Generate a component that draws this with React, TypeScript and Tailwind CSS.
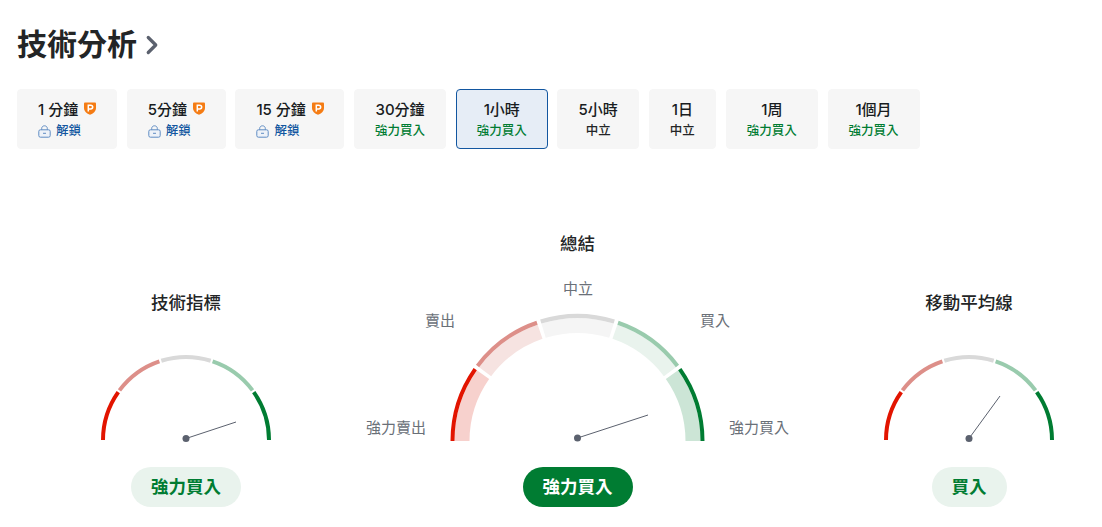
import React from 'react';
import { ChevronRight } from 'lucide-react';

const tabs = [
  { label: '1 分鐘', locked: true, width: 'w-[100px]' },
  { label: '5分鐘', locked: true, width: 'w-[99px]' },
  { label: '15 分鐘', locked: true, width: 'w-[109px]' },
  { label: '30分鐘', signal: '強力買入', width: 'w-[92px]' },
  { label: '1小時', signal: '強力買入', active: true, width: 'w-[92px]' },
  { label: '5小時', signal: '中立', width: 'w-[81.5px]' },
  { label: '1日', signal: '中立', width: 'w-[67.5px]' },
  { label: '1周', signal: '強力買入', width: 'w-[92px]' },
  { label: '1個月', signal: '強力買入', width: 'w-[92px]' },
];

const bounds = [180, 144, 108, 72, 36, 0];
const dark = ['#e21400', '#dd8f89', '#d9d9d9', '#99cbad', '#007c32'];
const light = ['#f7d1cd', '#f6e3e1', '#f5f5f5', '#e9f3ed', '#cce5d6'];

const pt = (cx: number, cy: number, r: number, deg: number) => {
  const a = (deg * Math.PI) / 180;
  return `${(cx + r * Math.cos(a)).toFixed(2)} ${(cy - r * Math.sin(a)).toFixed(2)}`;
};

const arc = (cx: number, cy: number, r: number, from: number, to: number) =>
  `M ${pt(cx, cy, r, from)} A ${r} ${r} 0 0 1 ${pt(cx, cy, r, to)}`;

function PBadge() {
  return (
    <svg width="12" height="13" viewBox="0 0 12 13" className="shrink-0 -mt-[3px]">
      <path d="M1.2 .4 H10.8 C11.5 .4 12 .9 12 1.6 V6 C12 9.2 9.2 11.6 6 12.8 C2.8 11.6 0 9.2 0 6 V1.6 C0 .9 .5 .4 1.2 .4 Z" fill="#f57c14" />
      <path d="M4.3 9.6 V3.2 H6.6 C7.9 3.2 8.7 4 8.7 5 C8.7 6.1 7.9 6.9 6.6 6.9 H4.8" fill="none" stroke="#fff" strokeWidth="1.5" />
    </svg>
  );
}

function LockIcon() {
  return (
    <svg width="13" height="13" viewBox="0 0 13 13" fill="#eef2f8" stroke="#5f8cc4" strokeWidth="1" className="shrink-0">
      <path d="M3.7 5 V3.4 C3.7 1.9 4.9 .8 6.5 .8 C8.1 .8 9.3 1.9 9.3 3.4 V5" fill="none" />
      <rect x=".8" y="4.8" width="11.4" height="7.4" rx="1.6" />
      <path d="M5 8.3 H8" />
    </svg>
  );
}

function Gauge({ width, outer, band, needle, hubY }: { width: number; outer: number; band: boolean; needle: [number, number]; hubY: number }) {
  const cx = width / 2;
  const cy = outer + 1;
  const gap = band ? 0.9 : 0.7;
  return (
    <svg width={width} height={outer + 4} viewBox={`0 0 ${width} ${outer + 4}`} className="block">
      {dark.map((c, i) => {
        const from = bounds[i] - (i === 0 ? 0 : gap);
        const to = bounds[i + 1] + (i === 4 ? 0 : gap);
        return (
          <g key={c}>
            {band && <path d={arc(cx, cy, outer - 11.5, from, to)} fill="none" stroke={light[i]} strokeWidth="15" />}
            <path d={arc(cx, cy, outer - 2, from, to)} fill="none" stroke={c} strokeWidth="4" />
          </g>
        );
      })}
      <rect x="0" y={outer + 1} width={width} height="3" fill="#fff" />
      <line x1={cx} y1={hubY} x2={needle[0]} y2={needle[1]} stroke="#5b616e" strokeWidth="1" />
      <circle cx={cx} cy={hubY} r="3.5" fill="#5b616e" />
    </svg>
  );
}

function Pill({ text, solid }: { text: string; solid?: boolean }) {
  return (
    <div className={`h-10 px-5 rounded-full flex items-center text-[17.5px] font-bold ${solid ? 'bg-[#007c32] text-white' : 'bg-[#e9f3ed] text-[#007c32]'}`}>
      {text}
    </div>
  );
}

export default function App() {
  return (
    <div className="w-[1102px] h-[527px] overflow-hidden bg-white pt-[26px] font-['Inter','Noto_Sans_CJK_TC',sans-serif] text-[#232526]">
      <div className="pl-[17px] flex items-center h-9">
        <h2 className="text-[30px] leading-9 font-bold">技術分析</h2>
        <ChevronRight size={30} strokeWidth={2.6} className="text-[#5b616e] mt-[1px]" />
      </div>

      <div className="pl-[17px] mt-[27px] flex gap-[9.7px]">
        {tabs.map((t) => (
          <div
            key={t.label}
            className={`${t.width} h-[60px] px-[20px] pt-[3px] rounded-[4px] border flex flex-col justify-center ${t.locked ? 'items-start' : 'items-center'} ${t.active ? 'bg-[#e6edf6] border-[#1256a0]' : 'bg-[#f6f6f6] border-[#f6f6f6]'}`}
          >
            <div className="flex items-center gap-[6px] text-[15px] leading-5 font-medium text-[#181c21] whitespace-nowrap">
              <span>{t.label}</span>
              {t.locked && <PBadge />}
            </div>
            {t.locked ? (
              <div className="mt-[1px] flex items-center gap-[5px] text-[12.5px] leading-5 font-medium text-[#1256a0] whitespace-nowrap">
                <LockIcon />
                <span>解鎖</span>
              </div>
            ) : (
              <div className={`mt-[1px] text-[12.5px] leading-5 font-medium whitespace-nowrap ${t.signal === '中立' ? 'text-[#232526]' : 'text-[#007c32]'}`}>{t.signal}</div>
            )}
          </div>
        ))}
      </div>

      <div className="mt-[83px] pl-[101px] pr-[48px] flex justify-between items-end">
        <div className="w-[170px] flex flex-col items-center">
          <div className="text-[17.5px] leading-6 font-medium mb-[39px] whitespace-nowrap">技術指標</div>
          <Gauge width={170} outer={85} band={false} needle={[135, 68]} hubY={84.5} />
          <div className="mt-[24px]">
            <Pill text="強力買入" />
          </div>
        </div>

        <div className="w-[255px] flex flex-col items-center">
          <div className="text-[17.5px] leading-6 font-medium mb-[57px]">總結</div>
          <div className="relative">
            <Gauge width={255} outer={127} band needle={[198, 102]} hubY={125} />
            <span className="absolute right-[279px] top-[105px] whitespace-nowrap text-[15px] leading-5 text-[#6a7078]">強力賣出</span>
            <span className="absolute left-[-25px] top-[-2px] whitespace-nowrap text-[15px] leading-5 text-[#6a7078]">賣出</span>
            <span className="absolute left-[113px] top-[-34px] whitespace-nowrap text-[15px] leading-5 text-[#6a7078]">中立</span>
            <span className="absolute left-[250px] top-[-2px] whitespace-nowrap text-[15px] leading-5 text-[#6a7078]">買入</span>
            <span className="absolute left-[279px] top-[105px] whitespace-nowrap text-[15px] leading-5 text-[#6a7078]">強力買入</span>
          </div>
          <div className="mt-[23px]">
            <Pill text="強力買入" solid />
          </div>
        </div>

        <div className="w-[170px] flex flex-col items-center">
          <div className="text-[17.5px] leading-6 font-medium mb-[39px] whitespace-nowrap">移動平均線</div>
          <Gauge width={170} outer={85} band={false} needle={[116, 42]} hubY={84.5} />
          <div className="mt-[24px]">
            <Pill text="買入" />
          </div>
        </div>
      </div>
    </div>
  );
}
